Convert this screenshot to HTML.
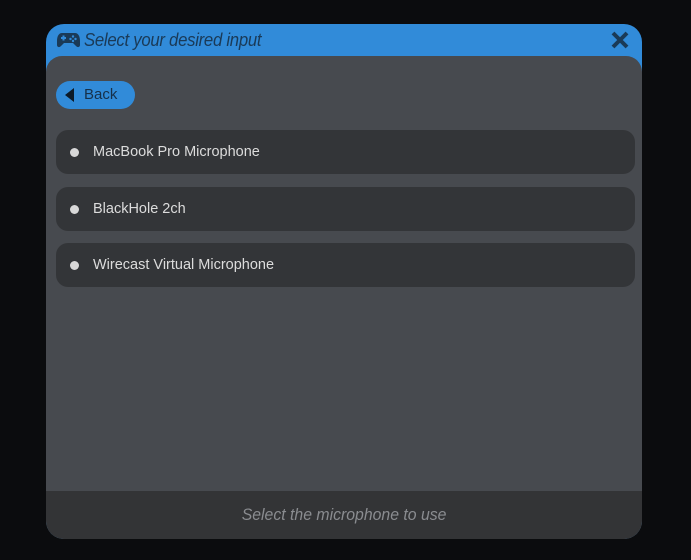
<!DOCTYPE html>
<html><head><meta charset="utf-8"><style>
*{margin:0;padding:0;box-sizing:border-box}
body{width:691px;height:560px;background:#0b0c0e;position:relative;overflow:hidden;font-family:"Liberation Sans",sans-serif}
.modal{position:absolute;left:46px;top:24px;width:596px;height:515px;background:#318bd9;border-radius:18px;overflow:hidden}
.title{position:absolute;left:38px;top:6px;font-size:18px;font-style:italic;color:#1a3a57;letter-spacing:-0.3px;transform:scaleX(0.93);transform-origin:left}
.close{position:absolute;left:564px;top:7px}
.content{position:absolute;left:0;top:32px;width:596px;height:483px;background:#474a4f;border-radius:16px 16px 0 0}
.back{position:absolute;left:10px;top:25px;width:79px;height:28px;background:#318bd9;border-radius:14px;color:#16304a;font-size:15px}
.back span{position:absolute;left:28px;top:5px}
.back i{position:absolute;left:9px;top:7px;width:0;height:0;border-top:7px solid transparent;border-bottom:7px solid transparent;border-right:9px solid #0c1a28}
.item{position:absolute;left:10px;width:579px;height:44px;background:#333538;border-radius:12px;color:#dcdcdc;font-size:14.5px}
.item b{position:absolute;left:14px;top:18px;width:9px;height:9px;border-radius:50%;background:#d8d8d8}
.item span{position:absolute;left:37px;top:14px}
.footer{position:absolute;left:0;top:467px;width:596px;height:48px;background:#333436;color:#8a8c90;font-size:17px;font-style:italic;text-align:center;line-height:48px}
.footer span{display:inline-block;transform:scaleX(0.93)}
</style></head><body>
<div class="modal">
<svg style="position:absolute;left:11px;top:8px" width="23" height="16" viewBox="0 0 23 16"><path d="M5 1h13c3 0 5 3 5 8v4c0 2-2 3-4 1l-3-3H7l-3 3c-2 2-4 1-4-1V9c0-5 2-8 5-8z" fill="#1a3a57"/><rect x="4" y="5" width="5" height="2" fill="#318bd9"/><rect x="5.5" y="3.5" width="2" height="5" fill="#318bd9"/><circle cx="16" cy="4.5" r="1.2" fill="#318bd9"/><circle cx="18.5" cy="7" r="1.2" fill="#318bd9"/><circle cx="13.5" cy="7" r="1.2" fill="#318bd9"/><circle cx="16" cy="9" r="1.2" fill="#318bd9"/></svg>
<div class="title">Select your desired input</div>
<svg class="close" width="20" height="18" viewBox="0 0 20 18"><path d="M3 2L17 16M17 2L3 16" stroke="#1a3a57" stroke-width="4"/></svg>
<div class="content">
<div class="back"><i></i><span>Back</span></div>
<div class="item" style="top:74px"><b></b><span>MacBook Pro Microphone</span></div>
<div class="item" style="top:131px"><b></b><span>BlackHole 2ch</span></div>
<div class="item" style="top:187px"><b></b><span>Wirecast Virtual Microphone</span></div>
</div>
<div class="footer"><span>Select the microphone to use</span></div>
</div>
</body></html>
